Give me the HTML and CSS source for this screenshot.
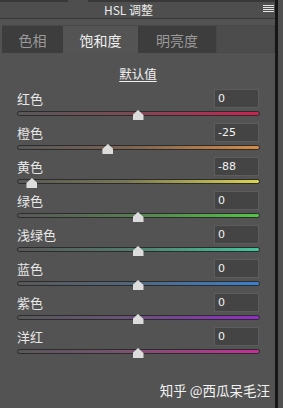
FILE: index.html
```html
<!DOCTYPE html>
<html lang="zh-CN">
<head>
    <meta charset="UTF-8">
    <title>HSL 调整</title>
    <link rel="stylesheet" href="styles.css">
</head>
<body>

<div class="panel">
    <!-- top strip of the neighbour panel -->
    <div class="top-strip">
        <div class="strip-piece strip-left"></div>
        <div class="strip-piece strip-right"></div>
    </div>

    <div class="header">
        <span class="title">HSL 调整</span>
        <svg class="menu-icon" width="11" height="8" viewBox="0 0 11 8">
            <rect x="0" y="0" width="11" height="1" fill="#e6e6e6"/>
            <rect x="0" y="2" width="11" height="1" fill="#e6e6e6"/>
            <rect x="0" y="4" width="11" height="1" fill="#e6e6e6"/>
            <rect x="0" y="6" width="11" height="1" fill="#e6e6e6"/>
        </svg>
    </div>

    <!-- Tabs -->
    <div class="tabs">
        <div class="tab tab-hue">色相</div>
        <div class="tab tab-sat active">饱和度</div>
        <div class="tab tab-light">明亮度</div>
        <div class="tab-rest"></div>
    </div>

    <div class="default-row"><span class="default-link">默认值</span></div>

    <!-- Sliders -->
    <div class="sliders">
        <div class="slider-row">
            <div class="row-top"><span class="label">红色</span><div class="value">0</div></div>
            <div class="track track-red"><div class="thumb" style="left: 50%"></div></div>
        </div>
        <div class="slider-row">
            <div class="row-top"><span class="label">橙色</span><div class="value">-25</div></div>
            <div class="track track-orange"><div class="thumb" style="left: 37.5%"></div></div>
        </div>
        <div class="slider-row">
            <div class="row-top"><span class="label">黄色</span><div class="value">-88</div></div>
            <div class="track track-yellow"><div class="thumb" style="left: 6%"></div></div>
        </div>
        <div class="slider-row">
            <div class="row-top"><span class="label">绿色</span><div class="value">0</div></div>
            <div class="track track-green"><div class="thumb" style="left: 50%"></div></div>
        </div>
        <div class="slider-row">
            <div class="row-top"><span class="label">浅绿色</span><div class="value">0</div></div>
            <div class="track track-aqua"><div class="thumb" style="left: 50%"></div></div>
        </div>
        <div class="slider-row">
            <div class="row-top"><span class="label">蓝色</span><div class="value">0</div></div>
            <div class="track track-blue"><div class="thumb" style="left: 50%"></div></div>
        </div>
        <div class="slider-row">
            <div class="row-top"><span class="label">紫色</span><div class="value">0</div></div>
            <div class="track track-purple"><div class="thumb" style="left: 50%"></div></div>
        </div>
        <div class="slider-row">
            <div class="row-top"><span class="label">洋红</span><div class="value">0</div></div>
            <div class="track track-magenta"><div class="thumb" style="left: 50%"></div></div>
        </div>
    </div>

    <div class="watermark">知乎 @西瓜呆毛汪</div>
</div>
<div class="edge"></div>
<div class="outside"></div>

</body>
</html>
```

FILE: styles.css
```css
body {
    margin: 0;
    padding: 0;
    width: 283px;
    height: 408px;
    overflow: hidden;
    display: flex;
    background-color: #535353;
    font-family: "Noto Sans CJK SC", "DejaVu Sans", sans-serif;
    color: #e8e8e8;
}
.panel {
    width: 275px;
    display: flex;
    flex-direction: column;
}
.edge {
    width: 3px;
    background-color: #161616;
}
.outside {
    flex-grow: 1;
    background-color: #505050;
}
.top-strip {
    height: 2px;
    display: flex;
    background-color: #4e4e4e;
}
.strip-piece {
    background-color: #383838;
}
.strip-left {
    width: 68px;
}
.strip-right {
    margin-left: 20px;
    flex-grow: 1;
}
.header {
    height: 16px;
    background-color: #4e4e4e;
    border-bottom: 1px solid #393939;
    display: flex;
    align-items: center;
    justify-content: center;
    position: relative;
}
.title {
    font-size: 12px;
    line-height: 16px;
    color: #ececec;
    margin-right: 18px;
}
.menu-icon {
    position: absolute;
    right: 1px;
    top: 3px;
}
.tabs {
    margin: 6px 0 0 2px;
    height: 27px;
    display: flex;
    border-top: 1px solid #474747;
}
.tab {
    display: flex;
    align-items: center;
    justify-content: center;
    font-size: 14px;
    color: #9a9a9a;
    background-color: #3d3d3d;
}
.tab-hue {
    width: 61px;
}
.tab-sat {
    width: 75px;
}
.tab-light {
    width: 78px;
}
.tab.active {
    background-color: #545454;
    color: #f0f0f0;
}
.tab-rest {
    flex-grow: 1;
    background-color: #4c4c4c;
    border: 1px solid #474747;
    border-top: none;
}
.default-row {
    margin-top: 7px;
    text-align: center;
    height: 16px;
}
.default-link {
    font-size: 12.5px;
    line-height: 16px;
    color: #f0f0f0;
    text-decoration: underline;
    text-underline-offset: 2px;
    margin-left: 1px;
}
.sliders {
    margin-top: 13px;
    padding-left: 17px;
    padding-right: 15px;
}
.slider-row {
    height: 34px;
}
.row-top {
    height: 19px;
    display: flex;
    align-items: center;
    justify-content: space-between;
}
.label {
    font-size: 13px;
    color: #e8e8e8;
}
.value {
    width: 40px;
    height: 17px;
    margin-right: 1px;
    background-color: #444444;
    border: 1px solid #5c5c5c;
    font-family: "DejaVu Sans", sans-serif;
    font-size: 11px;
    line-height: 17px;
    padding-left: 3px;
    color: #f2f2f2;
    box-sizing: content-box;
}
.track {
    margin-top: 3px;
    height: 3px;
    border: 1px solid #2c2c2c;
    border-radius: 3px;
    position: relative;
}
.thumb {
    position: absolute;
    top: -2px;
    width: 11px;
    height: 10px;
    margin-left: -6px;
    background-color: #dcdcdc;
    clip-path: polygon(50% 0, 100% 50%, 100% 100%, 0 100%, 0 50%);
}
.track-red {
    background: linear-gradient(to right, #585858, #7a4a55 45%, #cc2250);
}
.track-orange {
    background: linear-gradient(to right, #585858, #7a6250 45%, #d88c44);
}
.track-yellow {
    background: linear-gradient(to right, #585858, #7a7852 45%, #dad44e);
}
.track-green {
    background: linear-gradient(to right, #585858, #587a52 45%, #52c644);
}
.track-aqua {
    background: linear-gradient(to right, #585858, #527a6c 45%, #40c89c);
}
.track-blue {
    background: linear-gradient(to right, #585858, #52667a 45%, #3a80d0);
}
.track-purple {
    background: linear-gradient(to right, #585858, #6a527a 45%, #922cc8);
}
.track-magenta {
    background: linear-gradient(to right, #585858, #7a5270 45%, #c62e96);
}
.watermark {
    margin-top: 19px;
    text-align: right;
    padding-right: 5px;
    font-size: 13.5px;
    color: #f2f2f2;
}
```
